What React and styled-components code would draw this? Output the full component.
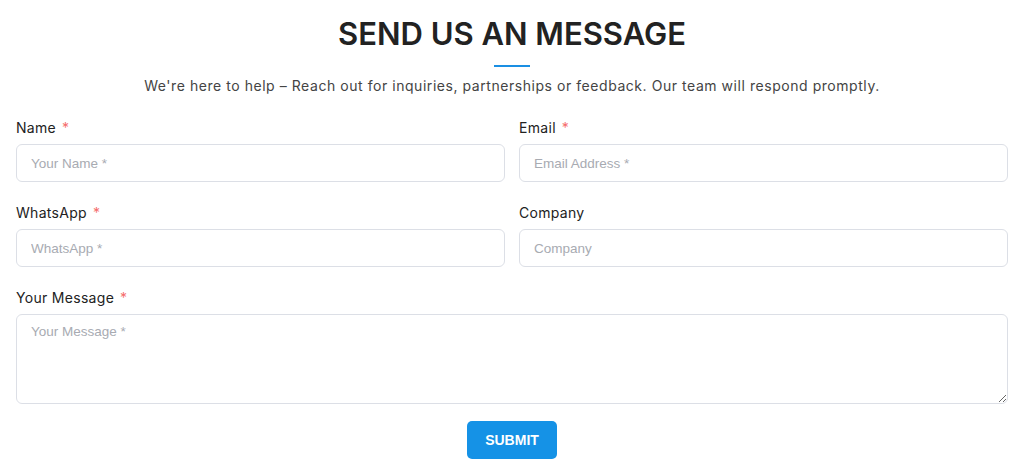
import React from 'react';
import styled, { createGlobalStyle } from 'styled-components';

const GlobalStyle = createGlobalStyle`
  body {
    margin: 0;
    background: #fff;
    font-family: 'Inter', 'Noto Sans', sans-serif;
  }
`;

const Page = styled.div`
  padding: 14px 16px 0;
`;

const Header = styled.div`
  display: flex;
  flex-direction: column;
  align-items: center;
`;

const Title = styled.h2`
  margin: 0;
  font-size: 31px;
  line-height: 40px;
  font-weight: 600;
  color: #222;
`;

const Divider = styled.div`
  width: 36px;
  height: 2px;
  background: #1a8fe3;
  margin-top: 11px;
`;

const Subtitle = styled.p`
  margin: 9px 0 0;
  font-size: 14px;
  line-height: 20px;
  letter-spacing: 0.55px;
  color: #444;
`;

const Form = styled.form`
  margin-top: 24px;
  display: grid;
  grid-template-columns: 1fr 1fr;
  column-gap: 14px;
  row-gap: 23px;
`;

const Field = styled.div`
  display: flex;
  flex-direction: column;
  gap: 8px;
  grid-column: ${({ full }) => (full ? '1 / -1' : 'auto')};
`;

const Label = styled.label`
  font-size: 14px;
  line-height: 16px;
  font-weight: 400;
  letter-spacing: 0.3px;
  color: #222;
`;

const Star = styled.span`
  color: #f56c6c;
  margin-left: 6px;
`;

const Input = styled.input`
  box-sizing: border-box;
  height: 38px;
  width: 100%;
  border: 1px solid #dcdfe6;
  border-radius: 6px;
  padding: 0 14px;
  font-family: 'Liberation Sans', Arial, sans-serif;
  font-size: 13.5px;
  color: #333;
  outline: none;
  &::placeholder {
    color: #a8abb2;
  }
`;

const TextArea = styled.textarea`
  box-sizing: border-box;
  height: 90px;
  width: 100%;
  border: 1px solid #dcdfe6;
  border-radius: 6px;
  padding: 8px 14px;
  font-family: 'Liberation Sans', Arial, sans-serif;
  font-size: 13.5px;
  line-height: 18px;
  color: #333;
  outline: none;
  resize: vertical;
  &::placeholder {
    color: #a8abb2;
  }
`;

const Actions = styled.div`
  display: flex;
  justify-content: center;
  margin-top: 17px;
`;

const Button = styled.button`
  width: 90px;
  height: 38px;
  border: none;
  border-radius: 5px;
  background: #1592e6;
  color: #fff;
  font-family: 'Liberation Sans', Arial, sans-serif;
  font-size: 14px;
  font-weight: 700;
  cursor: pointer;
`;

const fields = [
  { label: 'Name', placeholder: 'Your Name *', required: true },
  { label: 'Email', placeholder: 'Email Address *', required: true },
  { label: 'WhatsApp', placeholder: 'WhatsApp *', required: true },
  { label: 'Company', placeholder: 'Company', required: false },
];

const App = () => {
  return (
    <Page>
      <GlobalStyle />
      <Header>
        <Title>SEND US AN MESSAGE</Title>
        <Divider />
        <Subtitle>
          We're here to help – Reach out for inquiries, partnerships or feedback. Our team will respond promptly.
        </Subtitle>
      </Header>
      <Form onSubmit={(e) => e.preventDefault()}>
        {fields.map((f) => (
          <Field key={f.label}>
            <Label>
              {f.label}
              {f.required && <Star>*</Star>}
            </Label>
            <Input placeholder={f.placeholder} />
          </Field>
        ))}
        <Field full>
          <Label>
            Your Message<Star>*</Star>
          </Label>
          <TextArea placeholder="Your Message *" />
        </Field>
      </Form>
      <Actions>
        <Button type="submit">SUBMIT</Button>
      </Actions>
    </Page>
  );
};

export default App;
